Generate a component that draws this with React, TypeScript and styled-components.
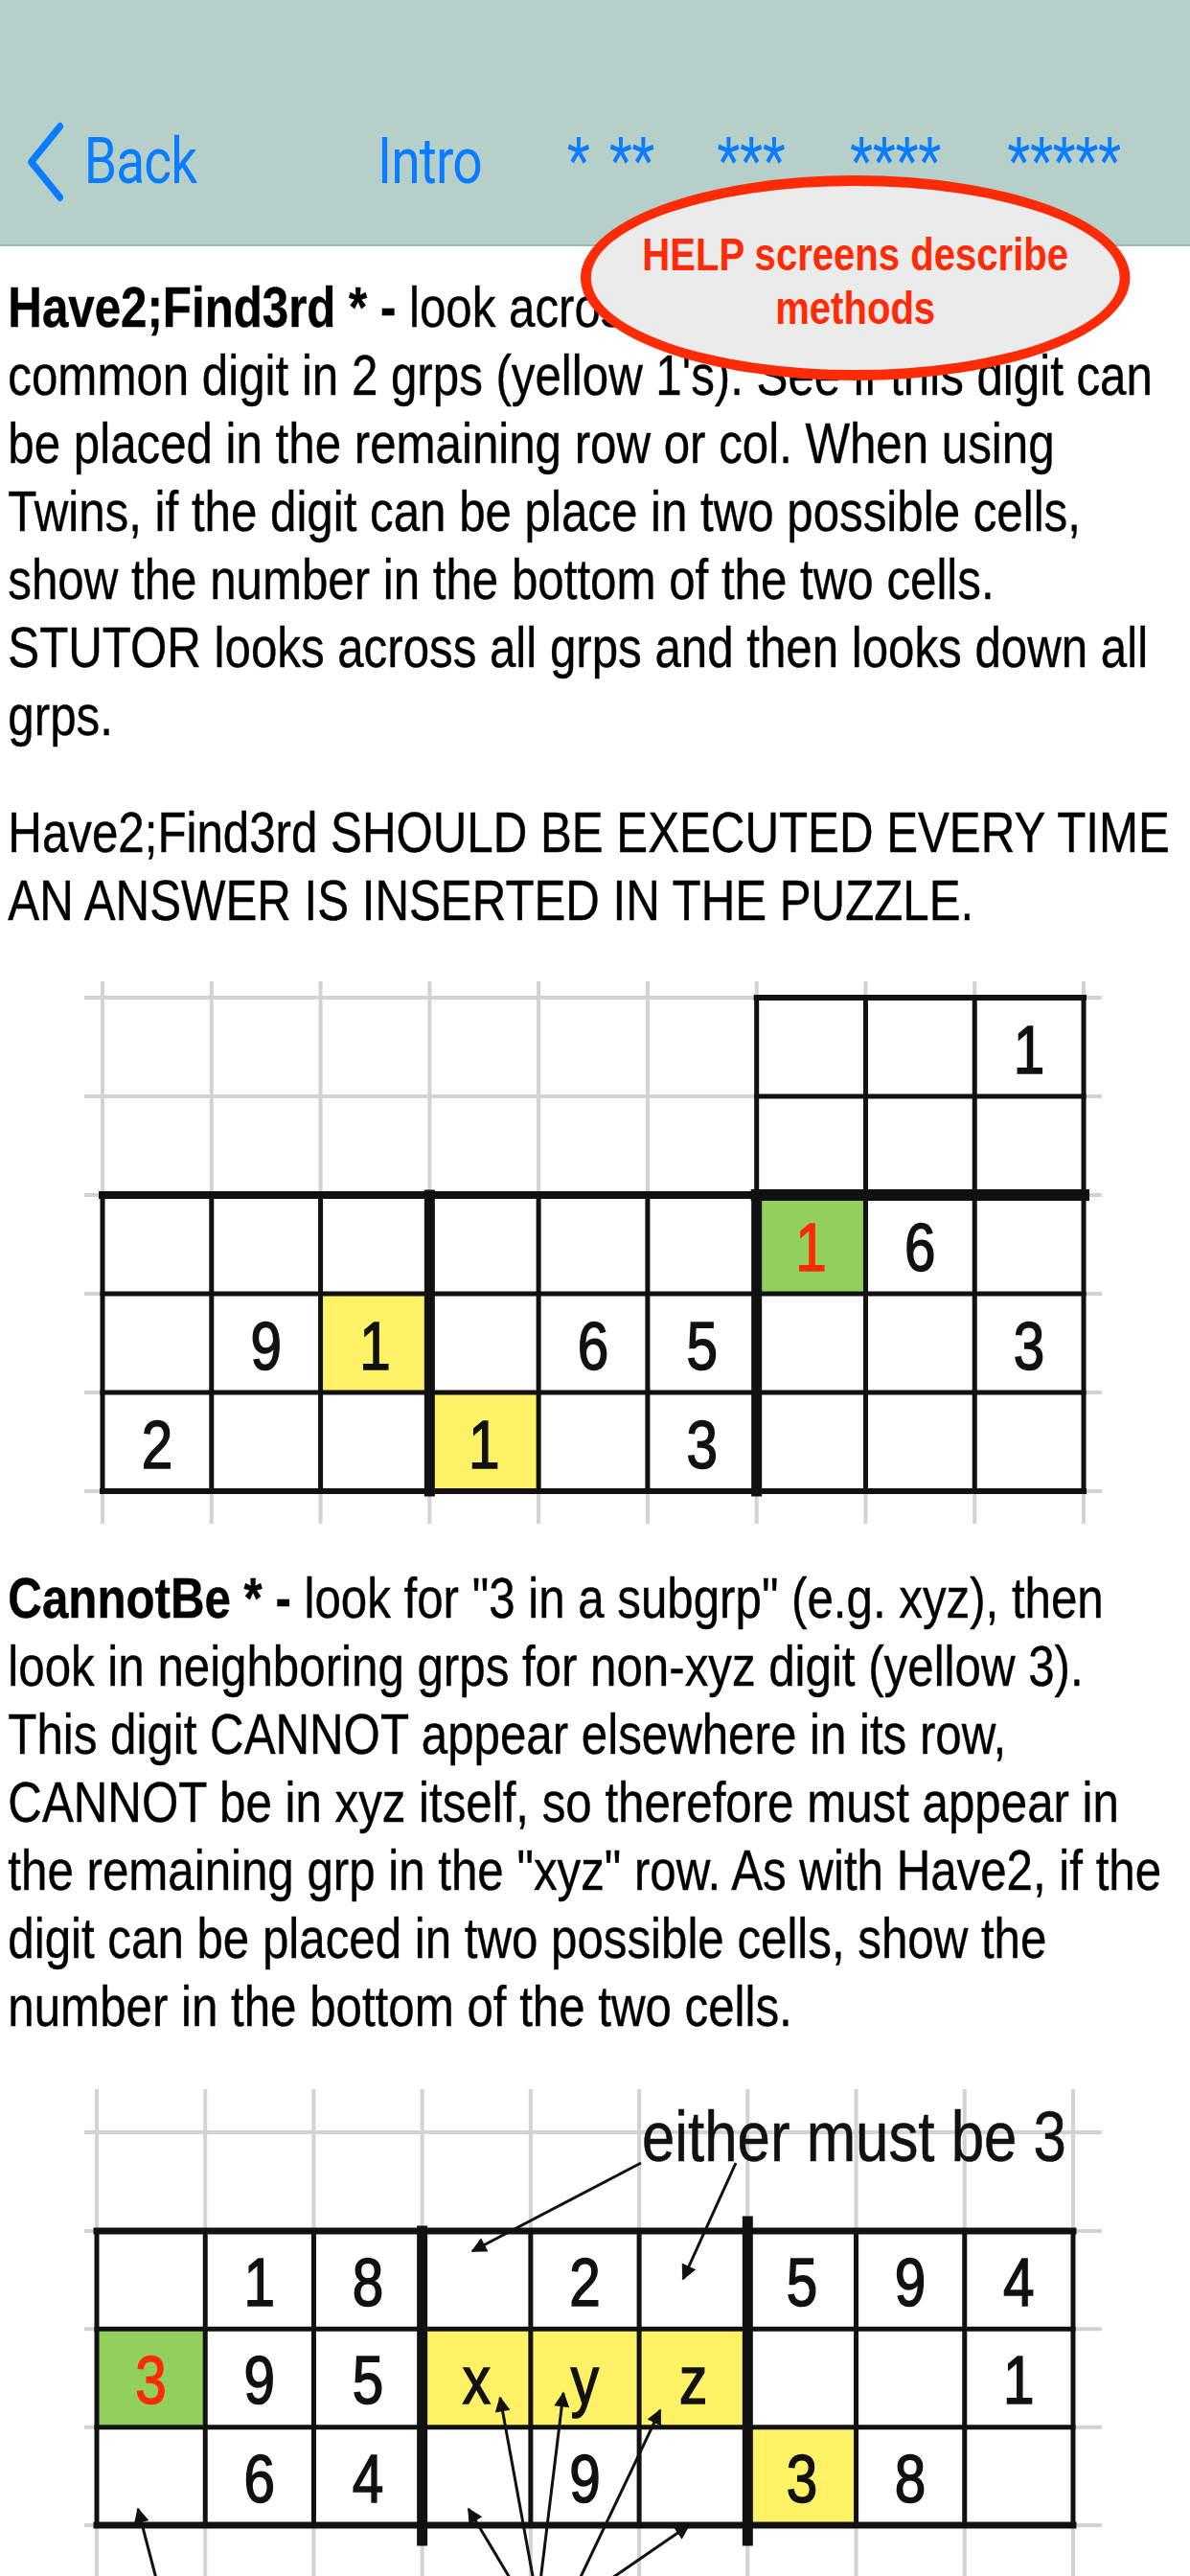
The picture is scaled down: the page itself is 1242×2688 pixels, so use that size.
import { createGlobalStyle, styled } from 'styled-components'

const PAGE_W = 1242
const STAGE_W = 1488
// the help page is laid out wide and squeezed to the phone width
const SQUEEZE = PAGE_W / STAGE_W

const BLUE = '#0a7cff'
const RED = '#ff2a06'
const YELLOW = '#fff266'
const GREEN = '#92cf5c'
const GREY_LINE = '#d3d3d3'

type Mark = { r: number; c: number; v: string; fill?: string }
type Seg = { x1: number; y1: number; x2: number; y2: number; w: number }

const seg = (x1: number, y1: number, x2: number, y2: number, w = 5): Seg => ({ x1, y1, x2, y2, w })
const colsAt = (left: number, w: number) => Array.from({ length: 10 }, (_, i) => left + i * w)
const rowsAt = (top: number, h: number, n: number) => Array.from({ length: n + 1 }, (_, i) => top + i * h)

// Have2;Find3rd example: top-right box over a full band of three rows
const F1 = { left: 107, top: 41, colW: 113.78, rowH: 103, rows: 5, height: 590 }
const F1X = colsAt(F1.left, F1.colW)
const F1Y = rowsAt(F1.top, F1.rowH, F1.rows)

const fig1Grey = [
  ...F1X.map((x) => seg(x, 24, x, F1.height, 4)),
  ...F1Y.map((y) => seg(88, y, 1150, y, 4)),
]

const fig1Ink = [
  seg(F1X[6], F1Y[0], F1X[9], F1Y[0], 6),
  seg(F1X[6], F1Y[1], F1X[9], F1Y[1], 5),
  ...[6, 7, 8, 9].map((i) => seg(F1X[i], F1Y[0], F1X[i], F1Y[2], 5)),
  seg(F1X[0], F1Y[2], F1X[9], F1Y[2], 8),
  seg(F1X[6], F1Y[2], F1X[9], F1Y[2], 12),
  seg(F1X[0], F1Y[3], F1X[9], F1Y[3], 5),
  seg(F1X[0], F1Y[4], F1X[9], F1Y[4], 5),
  seg(F1X[0], F1Y[5], F1X[9], F1Y[5], 6),
  ...F1X.map((x, i) => seg(x, F1Y[2], x, F1Y[5], i === 3 || i === 6 ? 11 : 5)),
]

const fig1Marks: Mark[] = [
  { r: 0, c: 8, v: '1' },
  { r: 2, c: 6, v: '1', fill: GREEN },
  { r: 2, c: 7, v: '6' },
  { r: 3, c: 1, v: '9' },
  { r: 3, c: 2, v: '1', fill: YELLOW },
  { r: 3, c: 4, v: '6' },
  { r: 3, c: 5, v: '5' },
  { r: 3, c: 8, v: '3' },
  { r: 4, c: 0, v: '2' },
  { r: 4, c: 3, v: '1', fill: YELLOW },
  { r: 4, c: 5, v: '3' },
]

// CannotBe example: one band with the xyz subgroup
const F2 = { left: 101, top: 178, colW: 113.22, rowH: 102.33, rows: 3, height: 560 }
const F2X = colsAt(F2.left, F2.colW)
const F2Y = rowsAt(F2.top, F2.rowH, F2.rows)

const fig2Grey = [
  ...F2X.map((x) => seg(x, 30, x, F2.height, 4)),
  seg(88, 75, 1150, 75, 4),
  ...F2Y.map((y) => seg(88, y, 1150, y, 4)),
]

const fig2Ink = [
  seg(F2X[0], F2Y[0], F2X[9], F2Y[0], 7),
  seg(F2X[0], F2Y[1], F2X[9], F2Y[1], 5),
  seg(F2X[0], F2Y[2], F2X[9], F2Y[2], 5),
  seg(F2X[0], F2Y[3], F2X[9], F2Y[3], 7),
  ...F2X.map((x) => seg(x, F2Y[0], x, F2Y[3], 5)),
  seg(F2X[3], F2Y[0], F2X[3], F2Y[3] + 16, 11),
  seg(F2X[6], F2Y[0] - 10, F2X[6], F2Y[3] + 16, 11),
]

const fig2Arrows = [
  seg(669, 107, 493, 199, 3),
  seg(768, 107, 713, 228, 3),
  seg(560, 560, 522, 352, 3),
  seg(562, 560, 588, 347, 3),
  seg(596, 560, 689, 365, 3),
  seg(544, 560, 489, 468, 3),
  seg(610, 560, 719, 485, 3),
  seg(168, 560, 144, 468, 3),
]

const fig2Marks: Mark[] = [
  { r: 0, c: 1, v: '1' },
  { r: 0, c: 2, v: '8' },
  { r: 0, c: 4, v: '2' },
  { r: 0, c: 6, v: '5' },
  { r: 0, c: 7, v: '9' },
  { r: 0, c: 8, v: '4' },
  { r: 1, c: 0, v: '3', fill: GREEN },
  { r: 1, c: 1, v: '9' },
  { r: 1, c: 2, v: '5' },
  { r: 1, c: 3, v: 'x', fill: YELLOW },
  { r: 1, c: 4, v: 'y', fill: YELLOW },
  { r: 1, c: 5, v: 'z', fill: YELLOW },
  { r: 1, c: 8, v: '1' },
  { r: 2, c: 1, v: '6' },
  { r: 2, c: 2, v: '4' },
  { r: 2, c: 4, v: '9' },
  { r: 2, c: 6, v: '3', fill: YELLOW },
  { r: 2, c: 7, v: '8' },
]

// difficulty tabs and the space before each
const STARS: [string, number][] = [
  ['*', 107],
  ['**', 24],
  ['***', 78],
  ['****', 81],
  ['*****', 83],
]

const HAVE2_LINES = [
  'common digit in 2 grps (yellow 1\'s). See if this digit can',
  'be placed in the remaining row or col. When using',
  'Twins, if the digit can be place in two possible cells,',
  'show the number in the bottom of the two cells.',
  'STUTOR looks across all grps and then looks down all',
  'grps.',
]

const CANNOT_LINES = [
  'look in neighboring grps for non-xyz digit (yellow 3).',
  'This digit CANNOT appear elsewhere in its row,',
  'CANNOT be in xyz itself, so therefore must appear in',
  'the remaining grp in the "xyz" row. As with Have2, if the',
  'digit can be placed in two possible cells, show the',
  'number in the bottom of the two cells.',
]

function Diagram({
  gap,
  spec,
  marks,
  grey,
  ink,
  arrows = [],
  note,
}: {
  gap: number
  spec: { left: number; top: number; colW: number; rowH: number; rows: number; height: number }
  marks: Mark[]
  grey: Seg[]
  ink: Seg[]
  arrows?: Seg[]
  note?: { text: string; x: number; y: number }
}) {
  const cells = []
  for (let r = 0; r < spec.rows; r++) {
    for (let c = 0; c < 9; c++) {
      const m = marks.find((k) => k.r === r && k.c === c)
      cells.push(
        <Cell key={`${r}-${c}`} $fill={m?.fill}>
          {m?.v}
        </Cell>,
      )
    }
  }

  return (
    <Figure $gap={gap} $height={spec.height}>
      <Board
        $left={spec.left / SQUEEZE}
        $top={spec.top}
        $colW={spec.colW / SQUEEZE}
        $rowH={spec.rowH}
      >
        {cells}
      </Board>
      <Lines viewBox={`0 0 ${PAGE_W} ${spec.height}`} preserveAspectRatio="none">
        <defs>
          <marker
            id="tip"
            viewBox="0 0 10 10"
            refX="9"
            refY="5"
            markerUnits="userSpaceOnUse"
            markerWidth="24"
            markerHeight="16"
            orient="auto"
          >
            <path d="M0,0 L10,5 L0,10 z" fill="#111" />
          </marker>
        </defs>
        {grey.map((s, i) => (
          <line key={`g${i}`} x1={s.x1} y1={s.y1} x2={s.x2} y2={s.y2} stroke={GREY_LINE} strokeWidth={s.w} />
        ))}
        {ink.map((s, i) => (
          <line
            key={`k${i}`}
            x1={s.x1}
            y1={s.y1}
            x2={s.x2}
            y2={s.y2}
            stroke="#111"
            strokeWidth={s.w}
            strokeLinecap="square"
          />
        ))}
        {arrows.map((s, i) => (
          <line
            key={`a${i}`}
            x1={s.x1}
            y1={s.y1}
            x2={s.x2}
            y2={s.y2}
            stroke="#111"
            strokeWidth={s.w}
            markerEnd="url(#tip)"
          />
        ))}
      </Lines>
      {note && (
        <Note $x={note.x / SQUEEZE} $y={note.y}>
          {note.text}
        </Note>
      )}
    </Figure>
  )
}

function App() {
  return (
    <>
      <GlobalStyle />
      <Stage>
        <Header>
          <NavLink $gap={0}>
            <Chevron viewBox="0 0 48 84">
              <polyline
                points="42,5 6,42 42,79"
                fill="none"
                stroke={BLUE}
                strokeWidth={8}
                strokeLinecap="round"
                strokeLinejoin="round"
              />
            </Chevron>
            Back
          </NavLink>
          <NavLink $gap={226}>Intro</NavLink>
          {STARS.map(([label, gap]) => (
            <StarTab key={label} $gap={gap}>
              {label}
            </StarTab>
          ))}
        </Header>

        <Callout>
          <span>HELP screens describe</span>
          <span>methods</span>
        </Callout>

        <Paragraph $gap={29}>
          <Line>
            <Lead>Have2;Find3rd * -</Lead> look across grps for a
          </Line>
          {HAVE2_LINES.map((t) => (
            <Line key={t}>{t}</Line>
          ))}
        </Paragraph>

        <Paragraph $gap={51}>
          <Line>Have2;Find3rd SHOULD BE EXECUTED EVERY TIME</Line>
          <Line>AN ANSWER IS INSERTED IN THE PUZZLE.</Line>
        </Paragraph>

        <Diagram gap={24} spec={F1} marks={fig1Marks} grey={fig1Grey} ink={fig1Ink} />

        <Paragraph $gap={43}>
          <Line>
            <Lead>CannotBe * -</Lead> look for "3 in a subgrp" (e.g. xyz), then
          </Line>
          {CANNOT_LINES.map((t) => (
            <Line key={t}>{t}</Line>
          ))}
        </Paragraph>

        <Diagram
          gap={20}
          spec={F2}
          marks={fig2Marks}
          grey={fig2Grey}
          ink={fig2Ink}
          arrows={fig2Arrows}
          note={{ text: 'either must be 3', x: 670, y: 43 }}
        />
      </Stage>
    </>
  )
}

const GlobalStyle = createGlobalStyle`
  html, body {
    margin: 0;
    padding: 0;
    overflow: hidden;
    background: #ffffff;
  }
`

const Stage = styled.div`
  position: relative;
  width: ${STAGE_W}px;
  transform: scaleX(${SQUEEZE});
  transform-origin: 0 0;
  font-family: 'Liberation Sans', Arial, sans-serif;
  color: #000;
`

const Header = styled.header`
  box-sizing: border-box;
  display: flex;
  align-items: flex-start;
  height: 257px;
  padding: 129px 0 0 33px;
  background: #b6d0c9;
  border-bottom: 2px solid #a4b4b0;
`

const NavLink = styled.span<{ $gap: number }>`
  display: flex;
  align-items: flex-start;
  margin-left: ${(p) => p.$gap}px;
  font-family: Roboto, 'Liberation Sans', sans-serif;
  font-size: 66px;
  line-height: 80px;
  letter-spacing: -1px;
  color: ${BLUE};
  white-space: pre;
`

const StarTab = styled(NavLink)`
  letter-spacing: 0;
`

const Chevron = styled.svg`
  width: 48px;
  height: 84px;
  margin: -2px 24px 0 0;
  flex-shrink: 0;
`

const Callout = styled.div`
  position: absolute;
  left: 726px;
  top: 183px;
  box-sizing: border-box;
  display: flex;
  flex-direction: column;
  align-items: center;
  justify-content: center;
  width: 687px;
  height: 214px;
  padding-top: 7px;
  border: 11px solid ${RED};
  border-left-width: 13px;
  border-right-width: 13px;
  border-radius: 50%;
  background: #ebebeb;
  font-size: 48px;
  font-weight: 700;
  line-height: 56px;
  color: ${RED};
  text-align: center;
  white-space: nowrap;
`

const Paragraph = styled.p<{ $gap: number }>`
  margin: ${(p) => p.$gap}px 0 0;
  padding-left: 10px;
  font-size: 59px;
  line-height: 71px;
  white-space: nowrap;
  -webkit-text-stroke: 0.4px #000;
`

const Line = styled.span`
  display: block;
`

const Lead = styled.b`
  font-weight: 700;
`

const Figure = styled.div<{ $gap: number; $height: number }>`
  position: relative;
  margin-top: ${(p) => p.$gap}px;
  height: ${(p) => p.$height}px;
`

const Board = styled.div<{ $left: number; $top: number; $colW: number; $rowH: number }>`
  display: grid;
  grid-template-columns: repeat(9, ${(p) => p.$colW}px);
  grid-auto-rows: ${(p) => p.$rowH}px;
  padding: ${(p) => p.$top}px 0 0 ${(p) => p.$left}px;
`

const Cell = styled.div<{ $fill?: string }>`
  box-sizing: border-box;
  display: flex;
  align-items: center;
  justify-content: center;
  padding-top: 6px;
  background: ${(p) => p.$fill ?? 'transparent'};
  color: ${(p) => (p.$fill === GREEN ? RED : '#111')};
  font-size: 70px;
  line-height: 70px;
  -webkit-text-stroke: 1.6px currentColor;
`

const Lines = styled.svg`
  position: absolute;
  inset: 0;
  width: 100%;
  height: 100%;
  overflow: visible;
  pointer-events: none;
`

const Note = styled.span<{ $x: number; $y: number }>`
  position: absolute;
  left: ${(p) => p.$x}px;
  top: ${(p) => p.$y}px;
  font-size: 74px;
  line-height: 73px;
  color: #111;
  white-space: nowrap;
  -webkit-text-stroke: 0.6px #111;
`

export default App
